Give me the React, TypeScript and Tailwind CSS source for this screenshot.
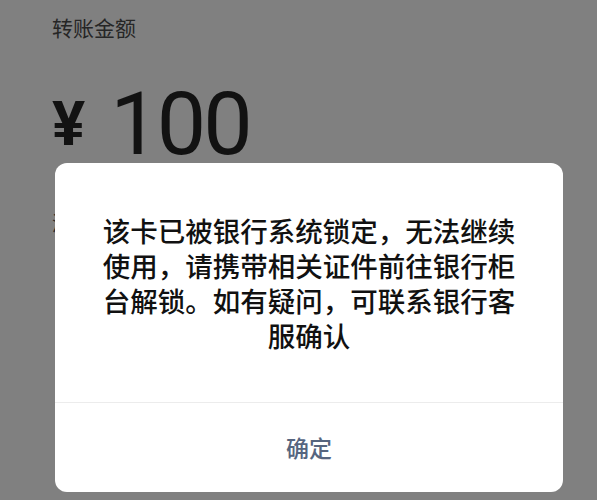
export default function App() {
  return (
    <div className="relative h-[500px] w-[597px] overflow-hidden bg-[#808080] font-['Noto_Sans_CJK_SC',sans-serif]">
      {/* page behind the dimmed overlay */}
      <div className="flex flex-col pl-[52px] pt-[12px]">
        <div className="text-[21px] leading-[30px] text-[#262626]">转账金额</div>
        <div className="mt-[38px] flex items-center font-['Roboto',sans-serif] text-[#121212]">
          <span className="text-[62px] font-bold leading-none">¥</span>
          <span className="ml-[25px] text-[88px] leading-none tracking-[-3px]">100</span>
        </div>
        <div className="mt-[40px] text-[20px] text-[#2a2a2a]">添加转账说明</div>
      </div>

      {/* alert dialog */}
      <div className="absolute left-[55px] top-[163px] flex h-[329px] w-[508px] flex-col rounded-[12px] bg-white">
        <div className="flex flex-1 items-center justify-center px-[44px]">
          <p className="text-center text-[27.5px] font-medium leading-[35px] text-[#111]">
            该卡已被银行系统锁定，无法继续使用，请携带相关证件前往银行柜台解锁。如有疑问，可联系银行客服确认
          </p>
        </div>
        <div className="h-px bg-[#ececec]" />
        <div className="flex h-[89px] items-center justify-center text-[23px] font-medium text-[#56657f]">
          确定
        </div>
      </div>
    </div>
  );
}
